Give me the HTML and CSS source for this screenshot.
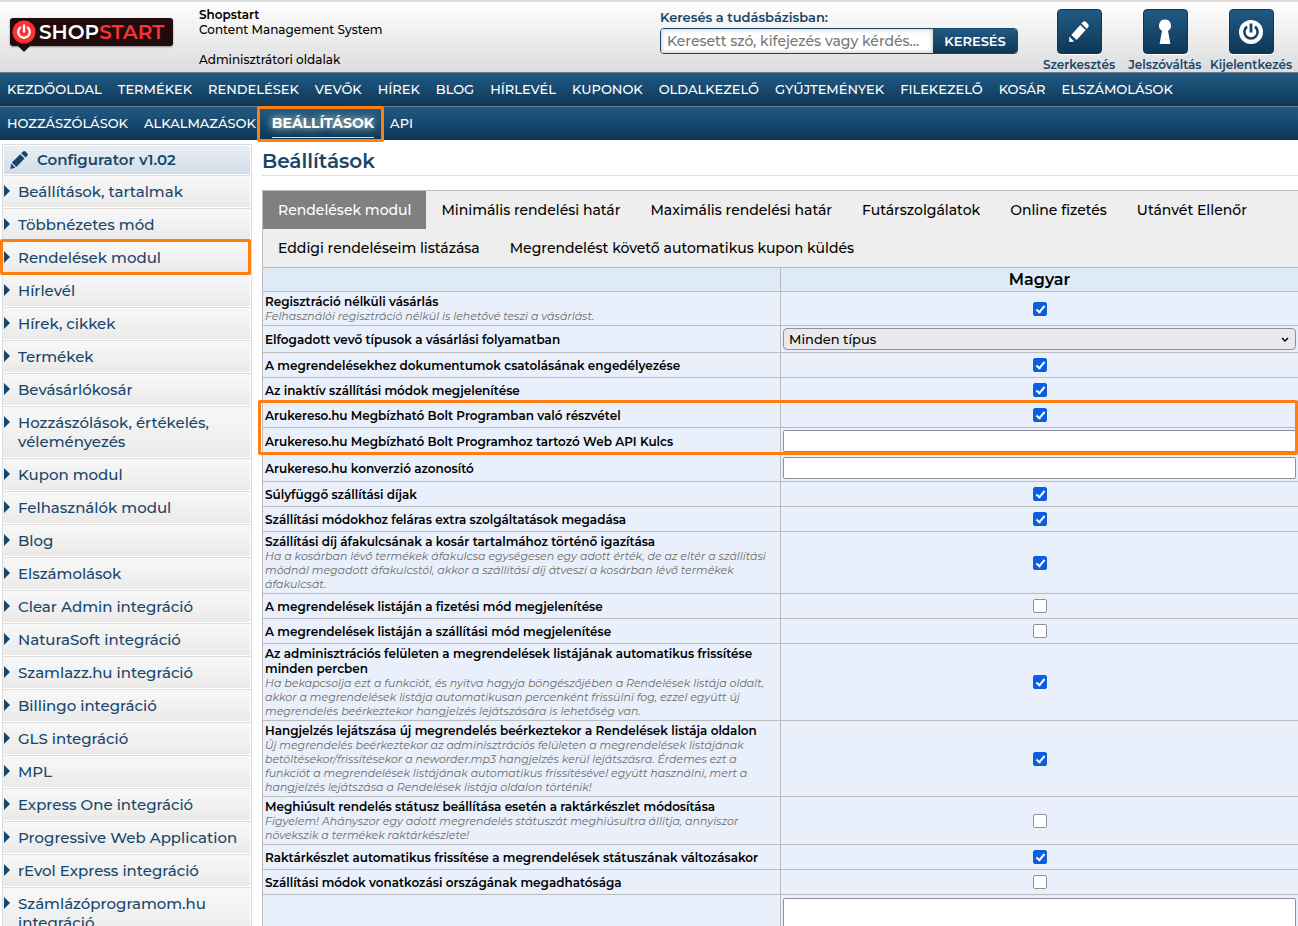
FILE: index.html
```html
<!DOCTYPE html>
<html lang="hu">
  <head>
    <meta charset="UTF-8" />
    <meta name="viewport" content="width=device-width, initial-scale=1.0" />
    <title>Shopstart - Beállítások</title>
    <link rel="stylesheet" href="styles.css">
  </head>
  <body>
    <header class="header">
      <a href="#" class="logo">
        <svg class="logo-icon" width="24" height="24" viewBox="0 0 24 24">
          <circle cx="12" cy="12" r="11.5" fill="#f83236"/>
          <path d="M8.2 7.6a5.8 5.8 0 1 0 7.6 0" fill="none" stroke="#fff" stroke-width="2.2" stroke-linecap="round"/>
          <path d="M12 5.5v6" stroke="#fff" stroke-width="2.4" stroke-linecap="round"/>
        </svg>
        <span>SHOP</span><span class="logo-red">START</span>
      </a>
      <div class="site-info">
        <strong>Shopstart</strong>
        <span>Content Management System</span>
        <span class="site-pages">Adminisztrátori oldalak</span>
      </div>
      <form class="search">
        <label for="search">Keresés a tudásbázisban:</label>
        <div class="search-row">
          <input type="text" id="search" placeholder="Keresett szó, kifejezés vagy kérdés...">
          <button type="button">KERESÉS</button>
        </div>
      </form>
      <div class="tools">
        <a href="#" class="tool">
          <span class="tool-icon">
            <svg width="28" height="28" viewBox="0 0 28 28" fill="#fff">
              <path d="M16.4 5.6l1.5-1.6q1.5-1.3 3.2.1l1.9 1.8q1.5 1.6.3 3.2l-1.5 1.7z"/>
              <path d="M15.2 6.9l5.4 5-8.9 10-5.4-5z"/>
              <path d="M4.2 18.6l5 4.9-4.9.6z"/>
            </svg>
          </span>
          Szerkesztés
        </a>
        <a href="#" class="tool">
          <span class="tool-icon">
            <svg width="28" height="28" viewBox="0 0 28 28" fill="#fff">
              <path d="M14 1.5a6 6 0 0 1 3 11.2l2.4 13.2h-10.8l2.4-13.2a6 6 0 0 1 3-11.2z"/>
            </svg>
          </span>
          Jelszóváltás
        </a>
        <a href="#" class="tool">
          <span class="tool-icon">
            <svg width="28" height="28" viewBox="0 0 28 28">
              <circle cx="14" cy="14" r="12" fill="#fff"/>
              <path d="M10 8.6a6.6 6.6 0 1 0 8 0" fill="none" stroke="#154468" stroke-width="2.6"/>
              <path d="M14 5.5v9" stroke="#154468" stroke-width="2.8"/>
            </svg>
          </span>
          Kijelentkezés
        </a>
      </div>
    </header>

    <nav class="menu">
      <a href="#">KEZDŐOLDAL</a>
      <a href="#">TERMÉKEK</a>
      <a href="#">RENDELÉSEK</a>
      <a href="#">VEVŐK</a>
      <a href="#">HÍREK</a>
      <a href="#">BLOG</a>
      <a href="#">HÍRLEVÉL</a>
      <a href="#">KUPONOK</a>
      <a href="#">OLDALKEZELŐ</a>
      <a href="#">GYŰJTEMÉNYEK</a>
      <a href="#">FILEKEZELŐ</a>
      <a href="#">KOSÁR</a>
      <a href="#">ELSZÁMOLÁSOK</a>
    </nav>
    <nav class="menu">
      <a href="#">HOZZÁSZÓLÁSOK</a>
      <a href="#">ALKALMAZÁSOK</a>
      <a href="#" class="active marked">BEÁLLÍTÁSOK</a>
      <a href="#">API</a>
    </nav>

    <div class="page">
      <aside class="sidebar">
        <h2>
          <svg width="20" height="20" viewBox="0 0 20 20" fill="#17466b">
            <path d="M12.2 3.2l1.8-1.8q1.3-.9 2.5.2l1.7 1.7q1.1 1.2.2 2.5l-1.8 1.8z"/>
            <path d="M11.2 4.2l4.4 4.4-8.3 8.3-4.4-4.4z"/>
            <path d="M2.1 13.6l4.2 4.2-4.9 1.1z"/>
          </svg>
          Configurator v1.02
        </h2>
        <ul>
          <li><a href="#">Beállítások, tartalmak</a></li>
          <li><a href="#">Többnézetes mód</a></li>
          <li class="marked"><a href="#">Rendelések modul</a></li>
          <li><a href="#">Hírlevél</a></li>
          <li><a href="#">Hírek, cikkek</a></li>
          <li><a href="#">Termékek</a></li>
          <li><a href="#">Bevásárlókosár</a></li>
          <li><a href="#">Hozzászólások, értékelés, véleményezés</a></li>
          <li><a href="#">Kupon modul</a></li>
          <li><a href="#">Felhasználók modul</a></li>
          <li><a href="#">Blog</a></li>
          <li><a href="#">Elszámolások</a></li>
          <li><a href="#">Clear Admin integráció</a></li>
          <li><a href="#">NaturaSoft integráció</a></li>
          <li><a href="#">Szamlazz.hu integráció</a></li>
          <li><a href="#">Billingo integráció</a></li>
          <li><a href="#">GLS integráció</a></li>
          <li><a href="#">MPL</a></li>
          <li><a href="#">Express One integráció</a></li>
          <li><a href="#">Progressive Web Application</a></li>
          <li><a href="#">rEvol Express integráció</a></li>
          <li><a href="#">Számlázóprogramom.hu integráció</a></li>
        </ul>
      </aside>

      <main class="content">
        <h1>Beállítások</h1>
        <div class="tabs">
          <a href="#" class="active">Rendelések modul</a>
          <a href="#">Minimális rendelési határ</a>
          <a href="#">Maximális rendelési határ</a>
          <a href="#">Futárszolgálatok</a>
          <a href="#">Online fizetés</a>
          <a href="#">Utánvét Ellenőr</a>
          <a href="#">Eddigi rendeléseim listázása</a>
          <a href="#">Megrendelést követő automatikus kupon küldés</a>
        </div>
        <table class="settings">
          <thead>
            <tr>
              <th></th>
              <th>Magyar</th>
            </tr>
          </thead>
          <tbody>
            <tr>
              <td>
                <label for="s1">Regisztráció nélküli vásárlás</label>
                <p>Felhasználói regisztráció nélkül is lehetővé teszi a vásárlást.</p>
              </td>
              <td><input type="checkbox" id="s1" checked></td>
            </tr>
            <tr>
              <td><label for="s2">Elfogadott vevő típusok a vásárlási folyamatban</label></td>
              <td>
                <div class="select">
                  <select id="s2">
                    <option>Minden típus</option>
                  </select>
                  <svg width="8" height="6" viewBox="0 0 8 6"><path d="M1 1l3 3 3-3" fill="none" stroke="#000" stroke-width="1.5"/></svg>
                </div>
              </td>
            </tr>
            <tr>
              <td><label for="s3">A megrendelésekhez dokumentumok csatolásának engedélyezése</label></td>
              <td><input type="checkbox" id="s3" checked></td>
            </tr>
            <tr>
              <td><label for="s4">Az inaktív szállítási módok megjelenítése</label></td>
              <td><input type="checkbox" id="s4" checked></td>
            </tr>
          </tbody>
          <tbody class="marked">
            <tr>
              <td><label for="s5">Arukereso.hu Megbízható Bolt Programban való részvétel</label></td>
              <td><input type="checkbox" id="s5" checked></td>
            </tr>
            <tr>
              <td><label for="s6">Arukereso.hu Megbízható Bolt Programhoz tartozó Web API Kulcs</label></td>
              <td><input type="text" id="s6"></td>
            </tr>
          </tbody>
          <tbody>
            <tr>
              <td><label for="s7">Arukereso.hu konverzió azonosító</label></td>
              <td><input type="text" id="s7"></td>
            </tr>
            <tr>
              <td><label for="s8">Súlyfüggő szállítási díjak</label></td>
              <td><input type="checkbox" id="s8" checked></td>
            </tr>
            <tr>
              <td><label for="s9">Szállítási módokhoz feláras extra szolgáltatások megadása</label></td>
              <td><input type="checkbox" id="s9" checked></td>
            </tr>
            <tr>
              <td>
                <label for="s10">Szállítási díj áfakulcsának a kosár tartalmához történő igazítása</label>
                <p>Ha a kosárban lévő termékek áfakulcsa egységesen egy adott érték, de az eltér a szállítási<br>módnál megadott áfakulcstól, akkor a szállítási díj átveszi a kosárban lévő termékek<br>áfakulcsát.</p>
              </td>
              <td><input type="checkbox" id="s10" checked></td>
            </tr>
            <tr>
              <td><label for="s11">A megrendelések listáján a fizetési mód megjelenítése</label></td>
              <td><input type="checkbox" id="s11"></td>
            </tr>
            <tr>
              <td><label for="s12">A megrendelések listáján a szállítási mód megjelenítése</label></td>
              <td><input type="checkbox" id="s12"></td>
            </tr>
            <tr>
              <td>
                <label for="s13">Az adminisztrációs felületen a megrendelések listájának automatikus frissítése<br>minden percben</label>
                <p>Ha bekapcsolja ezt a funkciót, és nyitva hagyja böngészőjében a Rendelések listája oldalt,<br>akkor a megrendelések listája automatikusan percenként frissülni fog, ezzel együtt új<br>megrendelés beérkeztekor hangjelzés lejátszására is lehetőség van.</p>
              </td>
              <td><input type="checkbox" id="s13" checked></td>
            </tr>
            <tr>
              <td>
                <label for="s14">Hangjelzés lejátszása új megrendelés beérkeztekor a Rendelések listája oldalon</label>
                <p>Új megrendelés beérkeztekor az adminisztrációs felületen a megrendelések listájának<br>betöltésekor/frissítésekor a neworder.mp3 hangjelzés kerül lejátszásra. Érdemes ezt a<br>funkciót a megrendelések listájának automatikus frissítésével együtt használni, mert a<br>hangjelzés lejátszása a Rendelések listája oldalon történik!</p>
              </td>
              <td><input type="checkbox" id="s14" checked></td>
            </tr>
            <tr>
              <td>
                <label for="s15">Meghiúsult rendelés státusz beállítása esetén a raktárkészlet módosítása</label>
                <p>Figyelem! Ahányszor egy adott megrendelés státuszát meghiúsultra állítja, annyiszor<br>növekszik a termékek raktárkészlete!</p>
              </td>
              <td><input type="checkbox" id="s15"></td>
            </tr>
            <tr>
              <td><label for="s16">Raktárkészlet automatikus frissítése a megrendelések státuszának változásakor</label></td>
              <td><input type="checkbox" id="s16" checked></td>
            </tr>
            <tr>
              <td><label for="s17">Szállítási módok vonatkozási országának megadhatósága</label></td>
              <td><input type="checkbox" id="s17"></td>
            </tr>
            <tr>
              <td></td>
              <td><textarea aria-label="Magyar"></textarea></td>
            </tr>
          </tbody>
        </table>
      </main>
    </div>
  </body>
</html>
```
FILE: styles.css
```css
* {
    box-sizing: border-box;
}

body {
    margin: 0;
    height: 100vh;
    overflow: hidden;
    font-family: Montserrat, Inter, sans-serif;
    font-size: 13px;
    font-weight: 500;
    line-height: 15px;
    color: #000;
    background: #fff;
}

a {
    color: inherit;
    text-decoration: none;
}

h1, h2, p, ul {
    margin: 0;
    padding: 0;
}

/* header */
.header {
    display: flex;
    height: 72px;
    border-top: 2px solid #ddd;
    background: linear-gradient(#fff, #dcdcdc);
}

.logo {
    display: flex;
    align-items: center;
    position: relative;
    width: 163px;
    height: 28px;
    margin: 16px 26px 0 10px;
    padding-left: 2px;
    border-radius: 3px;
    background: #220b0d;
    box-shadow: 0 1px 2px #888;
    color: #fff;
    font-size: 20px;
    font-weight: 600;
}

.logo::after {
    content: "";
    position: absolute;
    left: 8px;
    top: 28px;
    border: 6px solid transparent;
    border-top-color: #220b0d;
    border-bottom: 0;
}

.logo-icon {
    margin-right: 3px;
}

.logo-red {
    color: #f83236;
}

.site-info {
    display: flex;
    flex-direction: column;
    flex: 1;
    padding-top: 5px;
    font-size: 12px;
}

.site-info strong {
    font-weight: 600;
}

.site-pages {
    margin-top: 15px;
}

.search {
    width: 358px;
    padding-top: 8px;
    color: #17466b;
}

.search label {
    display: block;
    font-weight: 600;
    margin-bottom: 3px;
}

.search-row {
    display: flex;
    height: 26px;
    border: 1px solid #17466b;
    border-radius: 4px;
    overflow: hidden;
}

.search input {
    flex: 1;
    min-width: 0;
    padding: 0 6px;
    border: 0;
    font: inherit;
    font-size: 14px;
    box-shadow: inset 0 0 5px #bbb;
}

.search input::placeholder {
    color: #777;
}

.search button {
    width: 84px;
    padding: 0;
    border: 0;
    background: linear-gradient(#215a84, #0e3757);
    color: #fff;
    font: inherit;
    font-weight: 600;
}

.tools {
    display: flex;
    gap: 2px;
    margin: 7px 5px 0 19px;
    color: #17466b;
}

.tool {
    display: flex;
    flex-direction: column;
    align-items: center;
    gap: 3px;
    width: 84px;
    font-size: 12px;
    font-weight: 600;
    white-space: nowrap;
}

.tool-icon {
    display: flex;
    align-items: center;
    justify-content: center;
    width: 45px;
    height: 45px;
    border: 1px solid #0e3757;
    border-radius: 4px;
    background: linear-gradient(#215a84, #0e3757);
    box-shadow: 0 1px 0 #fff;
}

/* menu */
.menu {
    display: flex;
    align-items: center;
    gap: 16px;
    height: 34px;
    padding-left: 7px;
    border-top: 1px solid #6d7a85;
    background: linear-gradient(#215a84, #0e3757);
    color: #fff;
    white-space: nowrap;
}

.menu .active {
    position: relative;
    padding-bottom: 6px;
    margin-top: 6px;
    border-bottom: 1px solid #ddd;
    font-size: 14px;
    font-weight: 700;
    text-shadow: 0 0 8px #ffd;
}

/* orange frames */
.marked {
    position: relative;
}

.marked::after {
    content: "";
    position: absolute;
    inset: -2px 0 -1px -4px;
    border: 3px solid #ff7f0e;
    border-radius: 2px;
    z-index: 1;
    pointer-events: none;
}

.menu .marked::after {
    inset: -10px -10px -5px -15px;
}

.sidebar .marked::after {
    inset: -3px 0 -1px -3px;
}

/* page */
.page {
    display: flex;
    align-items: flex-start;
    gap: 10px;
}

.sidebar {
    width: 250px;
    flex: none;
    margin: 4px 0 0 2px;
    border: 1px solid #ddd;
    color: #17466b;
}

.sidebar h2 {
    display: flex;
    align-items: center;
    gap: 8px;
    height: 31px;
    padding: 0 0 2px 5px;
    border: 1px solid #fff;
    border-bottom: 1px solid #ddd;
    background: linear-gradient(#e9eff5, #d0dce9);
    box-shadow: inset 0 -1px #fff;
    font-size: 15px;
    font-weight: 600;
}

.sidebar ul {
    list-style: none;
}

.sidebar li {
    border-bottom: 1px solid #ddd;
}

.sidebar li a {
    display: block;
    position: relative;
    padding: 6px 8px 6px 15px;
    border-bottom: 1px solid #fff;
    border-right: 1px solid #fff;
    background: linear-gradient(#f8f8f8, #ebeae9);
    font-size: 15px;
    line-height: 19px;
}

.sidebar li a::before {
    content: "";
    position: absolute;
    left: 1px;
    top: 9px;
    border: 6px solid transparent;
    border-left-color: #17466b;
    border-right: 0;
}

.content {
    flex: 1;
    min-width: 0;
}

h1 {
    height: 36px;
    margin-bottom: 14px;
    border-bottom: 1px solid #ddd;
    color: #17466b;
    font-size: 20px;
    font-weight: 600;
    line-height: 42px;
}

.tabs {
    display: flex;
    flex-wrap: wrap;
    border: 1px solid #bbb;
    border-width: 1px 0 0 1px;
    background: #eee;
    font-size: 14px;
}

.tabs a {
    padding: 0 15px;
    line-height: 38px;
}

.tabs .active {
    background: #808080;
    color: #fff;
}

.settings {
    width: 100%;
    border-spacing: 0;
    table-layout: fixed;
    background: #e9f0fb;
}

.settings th,
.settings td {
    border: 1px solid #bbb;
    border-width: 1px 0 0 1px;
}

.settings th {
    height: 24px;
    padding: 0;
    background: #deebf7;
    font-size: 16px;
    font-weight: 600;
}

.settings td {
    padding: 2px;
    text-align: center;
}

.settings td:first-child {
    text-align: left;
    white-space: nowrap;
}

.settings label {
    display: block;
    font-size: 12px;
    font-weight: 600;
}

.settings p {
    color: #6c6c6c;
    font-size: 11px;
    font-style: italic;
    font-weight: 400;
    line-height: 14px;
}

.settings input[type="checkbox"] {
    appearance: none;
    display: block;
    position: relative;
    width: 14px;
    height: 14px;
    margin: 3px auto;
    border: 1px solid #8f8f9d;
    border-radius: 2px;
    background: #fff;
}

.settings input[type="checkbox"]:checked {
    border-color: #0a5fe0;
    background: #0a5fe0;
}

.settings input[type="checkbox"]:checked::after {
    content: "";
    position: absolute;
    box-sizing: border-box;
    left: 4px;
    top: 1px;
    width: 5px;
    height: 9px;
    border: solid #fff;
    border-width: 0 2px 2px 0;
    transform: rotate(40deg);
}

.settings input[type="text"],
.settings textarea,
.settings select {
    display: block;
    width: 100%;
    height: 22px;
    border: 1px solid #8f8f9d;
    border-radius: 2px;
    background: #fff;
    font: inherit;
}

.settings textarea {
    height: 60px;
    margin-top: 1px;
    resize: none;
}

.select {
    position: relative;
}

.settings select {
    appearance: none;
    padding: 0 5px;
    border-radius: 4px;
    background: #e9e9ed;
    color: #000;
}

.select svg {
    position: absolute;
    right: 7px;
    top: 9px;
}
```
